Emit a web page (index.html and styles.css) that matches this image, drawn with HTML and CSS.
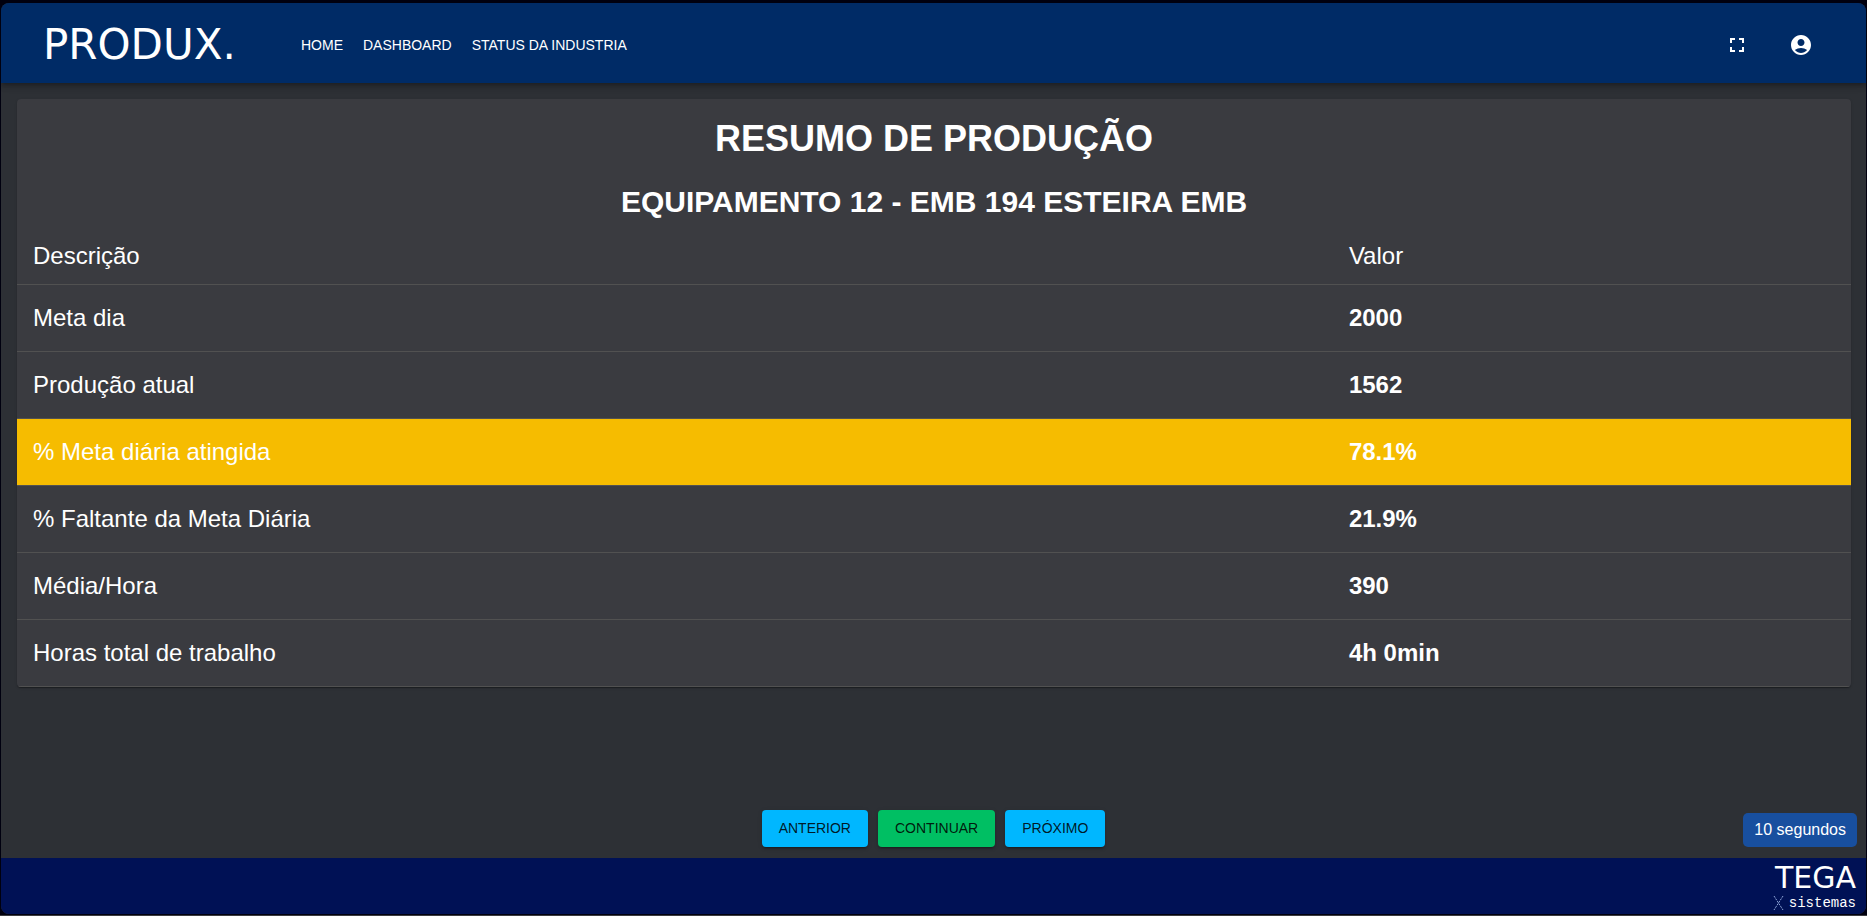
FILE: index.html
```html
<!DOCTYPE html>
<html lang="pt-BR">
<head>
    <meta charset="UTF-8">
    <meta name="viewport" content="width=device-width, initial-scale=1.0">
    <title>Produx - Resumo de Produção</title>
    <link rel="stylesheet" href="styles.css">
</head>
<body>
    <div class="app">
        <header class="topbar">
            <a class="logo" href="#">PRODUX.</a>
            <nav class="menu">
                <a href="#">HOME</a>
                <a href="#">DASHBOARD</a>
                <a href="#">STATUS DA INDUSTRIA</a>
            </nav>
            <div class="tools">
                <button class="icon-button" type="button" aria-label="Tela cheia">
                    <svg viewBox="0 0 24 24"><path d="M7 14H5v5h5v-2H7v-3zm-2-4h2V7h3V5H5v5zm12 7h-3v2h5v-5h-2v3zM14 5v2h3v3h2V5h-5z"/></svg>
                </button>
                <button class="icon-button" type="button" aria-label="Conta">
                    <svg viewBox="0 0 24 24"><path d="M12 2C6.48 2 2 6.48 2 12s4.48 10 10 10 10-4.48 10-10S17.52 2 12 2zm0 4c1.93 0 3.5 1.57 3.5 3.5S13.93 13 12 13s-3.5-1.57-3.5-3.5S10.07 6 12 6zm0 14c-2.03 0-4.43-.82-6.14-2.88C7.55 15.8 9.68 15 12 15s4.45.8 6.14 2.12C16.43 19.18 14.03 20 12 20z"/></svg>
                </button>
            </div>
        </header>

        <main class="content">
            <section class="card">
                <h1>RESUMO DE PRODUÇÃO</h1>
                <h2>EQUIPAMENTO 12 - EMB 194 ESTEIRA EMB</h2>
                <table class="summary">
                    <thead>
                        <tr>
                            <th class="col-desc" scope="col">Descrição</th>
                            <th scope="col">Valor</th>
                        </tr>
                    </thead>
                    <tbody>
                        <tr>
                            <td>Meta dia</td>
                            <td class="value">2000</td>
                        </tr>
                        <tr>
                            <td>Produção atual</td>
                            <td class="value">1562</td>
                        </tr>
                        <tr class="warning">
                            <td>% Meta diária atingida</td>
                            <td class="value">78.1%</td>
                        </tr>
                        <tr>
                            <td>% Faltante da Meta Diária</td>
                            <td class="value">21.9%</td>
                        </tr>
                        <tr>
                            <td>Média/Hora</td>
                            <td class="value">390</td>
                        </tr>
                        <tr>
                            <td>Horas total de trabalho</td>
                            <td class="value">4h 0min</td>
                        </tr>
                    </tbody>
                </table>
            </section>
        </main>

        <div class="actions">
            <div class="buttons">
                <button class="btn" type="button">ANTERIOR</button>
                <button class="btn btn-success" type="button">CONTINUAR</button>
                <button class="btn" type="button">PRÓXIMO</button>
            </div>
            <span class="timer">10 segundos</span>
        </div>

        <footer class="footer">
            <div class="brand">
                <span class="brand-name">TEGA</span>
                <span class="brand-sub">
                    <svg class="brand-mark" viewBox="0 0 12 16"><path d="M1 1l9 14M10 1L1 15"/></svg>
                    sistemas
                </span>
            </div>
        </footer>
    </div>
</body>
</html>
```

FILE: styles.css
```css
* {
    box-sizing: border-box;
}

body {
    margin: 0;
    background-color: #00000f;
    border-bottom: 1px solid #3b3b40;
    color: #fff;
    font-family: "Liberation Sans", Arial, sans-serif;
    min-height: 100vh;
    display: flex;
    flex-direction: column;
    padding: 3px 1px 1px 1px;
}

.app {
    flex: 1;
    display: flex;
    flex-direction: column;
    background-color: #2d3035;
    border-radius: 8px;
    overflow: hidden;
}

/* top bar */
.topbar {
    display: flex;
    align-items: center;
    height: 80px;
    padding: 4px 45px 0 42px;
    background-color: #002b66;
    box-shadow: 0 2px 4px -1px rgba(0, 0, 0, 0.2), 0 4px 5px rgba(0, 0, 0, 0.14), 0 1px 10px rgba(0, 0, 0, 0.12);
}

.logo {
    width: 258px;
    color: #fff;
    font-family: "DejaVu Sans", sans-serif;
    font-size: 42px;
    line-height: 48px;
    text-decoration: none;
}

.menu {
    display: flex;
    gap: 20px;
}

.menu a {
    color: #fff;
    font-size: 14px;
    line-height: 20px;
    text-decoration: none;
}

.tools {
    display: flex;
    gap: 24px;
    margin-left: auto;
}

.icon-button {
    width: 40px;
    height: 40px;
    padding: 8px;
    border: none;
    border-radius: 50%;
    background: none;
    cursor: pointer;
}

.icon-button svg {
    display: block;
    width: 24px;
    height: 24px;
    fill: #fff;
}

/* summary card */
.content {
    flex: 1;
    padding: 16px 15px 16px 16px;
}

.card {
    padding-top: 19px;
    background-color: #3a3b40;
    border-radius: 4px;
    box-shadow: 0 2px 1px -1px rgba(0, 0, 0, 0.2), 0 1px 1px rgba(0, 0, 0, 0.14), 0 1px 3px rgba(0, 0, 0, 0.12);
    overflow: hidden;
}

.card h1,
.card h2 {
    margin: 0;
    text-align: center;
}

.card h1 {
    margin-bottom: 23px;
    font-size: 36px;
    line-height: 42px;
}

.card h2 {
    margin-bottom: 7px;
    font-size: 30px;
    line-height: 38px;
}

.summary {
    width: 100%;
    border-collapse: separate;
    border-spacing: 0;
    font-size: 24px;
}

.summary th,
.summary td {
    padding: 16px;
    border-bottom: 1px solid #515151;
    text-align: left;
    line-height: 34px;
}

.summary th {
    font-weight: normal;
    line-height: 24px;
}

.summary .col-desc {
    width: 71.75%;
}

.summary .value {
    font-weight: bold;
}

.warning {
    background-color: #f6bc00;
}

/* bottom actions */
.actions {
    display: grid;
    grid-template-columns: 1fr auto 1fr;
    align-items: end;
    padding: 0 9px 11px;
}

.buttons {
    grid-column: 2;
    display: flex;
    gap: 10px;
}

.btn {
    padding: 6px 17px;
    border: none;
    border-radius: 4px;
    background-color: #00b7ff;
    box-shadow: 0 3px 1px -2px rgba(0, 0, 0, 0.2), 0 2px 2px rgba(0, 0, 0, 0.14), 0 1px 5px rgba(0, 0, 0, 0.12);
    color: rgba(0, 0, 0, 0.87);
    font-family: inherit;
    font-size: 14px;
    line-height: 25px;
    cursor: pointer;
}

.btn-success {
    background-color: #00bf63;
}

.timer {
    justify-self: end;
    padding: 6px 11px;
    border-radius: 5px;
    background-color: #184f9f;
    font-size: 16px;
    line-height: 22px;
}

/* footer */
.footer {
    display: flex;
    justify-content: flex-end;
    height: 56px;
    padding: 2px 10px 0 0;
    background-color: #001155;
}

.brand {
    display: flex;
    flex-direction: column;
    align-items: flex-end;
}

.brand-name {
    font-family: "DejaVu Sans", sans-serif;
    font-size: 30px;
    line-height: 35px;
}

.brand-sub {
    display: flex;
    align-items: center;
    gap: 4px;
    font-family: "Liberation Mono", monospace;
    font-size: 14px;
    line-height: 16px;
}

.brand-mark {
    width: 12px;
    height: 16px;
    fill: none;
    stroke: #8fa6d8;
    stroke-width: 1;
    stroke-dasharray: 2 1;
}
```
